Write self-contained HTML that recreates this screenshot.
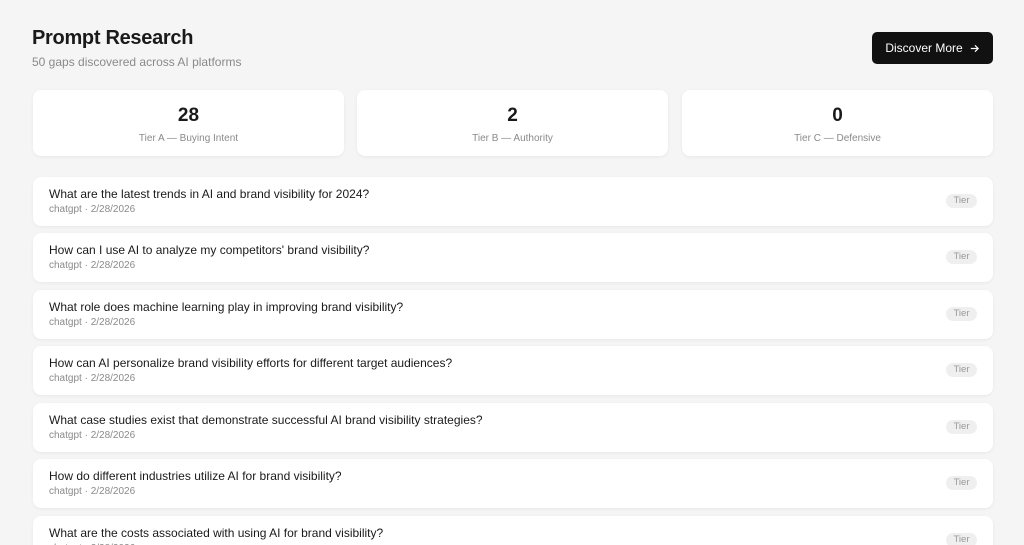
<!DOCTYPE html>
<html><head><style>
*{margin:0;padding:0;box-sizing:border-box}
html,body{width:1024px;height:545px;overflow:hidden}
body{background:#f5f5f5;font-family:"Liberation Sans",sans-serif;color:#1a1a1a;position:relative}
h1{position:absolute;left:32px;top:27px;font-size:20px;font-weight:600;letter-spacing:-0.3px}
.sub{position:absolute;left:32px;top:55px;font-size:12px;color:#8a8a8a}
.btn{position:absolute;left:872px;top:32px;width:121px;height:32px;background:#111;border-radius:5px;color:#fff;font-size:12px;display:flex;align-items:center;justify-content:center;gap:6px}
.card{position:absolute;top:90px;width:311px;height:66px;background:#fff;border-radius:8px;box-shadow:0 1px 3px rgba(0,0,0,.06);text-align:center}
.card b{display:block;font-size:19px;margin-top:15px;font-weight:700}
.card span{display:block;font-size:10px;color:#8a8a8a;margin-top:6px}
.row{position:absolute;left:33px;width:960px;height:49px;background:#fff;border-radius:8px;box-shadow:0 1px 3px rgba(0,0,0,.06)}
.q{position:absolute;left:16px;top:10px;font-size:12px;color:#1a1a1a}
.m{position:absolute;left:16px;top:27px;font-size:10px;color:#8a8a8a}
.t{position:absolute;left:913px;top:17px;width:31px;height:14px;border-radius:7px;background:#efefef;color:#999;font-size:9.5px;text-align:center;line-height:14px}
</style></head><body>
<h1>Prompt Research</h1>
<div class="sub">50 gaps discovered across AI platforms</div>
<div class="btn">Discover More <svg width="11" height="11" viewBox="0 0 12 12"><path d="M2 6h8M6.5 2.5L10 6l-3.5 3.5" stroke="#fff" stroke-width="1.3" fill="none"/></svg></div>
<div class="card" style="left:33px"><b>28</b><span>Tier A — Buying Intent</span></div>
<div class="card" style="left:357px"><b>2</b><span>Tier B — Authority</span></div>
<div class="card" style="left:682px"><b>0</b><span>Tier C — Defensive</span></div>
<div class="row" style="top:177px"><div class="q">What are the latest trends in AI and brand visibility for 2024?</div><div class="m">chatgpt · 2/28/2026</div><div class="t">Tier</div></div>
<div class="row" style="top:233px"><div class="q">How can I use AI to analyze my competitors' brand visibility?</div><div class="m">chatgpt · 2/28/2026</div><div class="t">Tier</div></div>
<div class="row" style="top:290px"><div class="q">What role does machine learning play in improving brand visibility?</div><div class="m">chatgpt · 2/28/2026</div><div class="t">Tier</div></div>
<div class="row" style="top:346px"><div class="q">How can AI personalize brand visibility efforts for different target audiences?</div><div class="m">chatgpt · 2/28/2026</div><div class="t">Tier</div></div>
<div class="row" style="top:403px"><div class="q">What case studies exist that demonstrate successful AI brand visibility strategies?</div><div class="m">chatgpt · 2/28/2026</div><div class="t">Tier</div></div>
<div class="row" style="top:459px"><div class="q">How do different industries utilize AI for brand visibility?</div><div class="m">chatgpt · 2/28/2026</div><div class="t">Tier</div></div>
<div class="row" style="top:516px"><div class="q">What are the costs associated with using AI for brand visibility?</div><div class="m">chatgpt · 2/28/2026</div><div class="t">Tier</div></div>
</body></html>
